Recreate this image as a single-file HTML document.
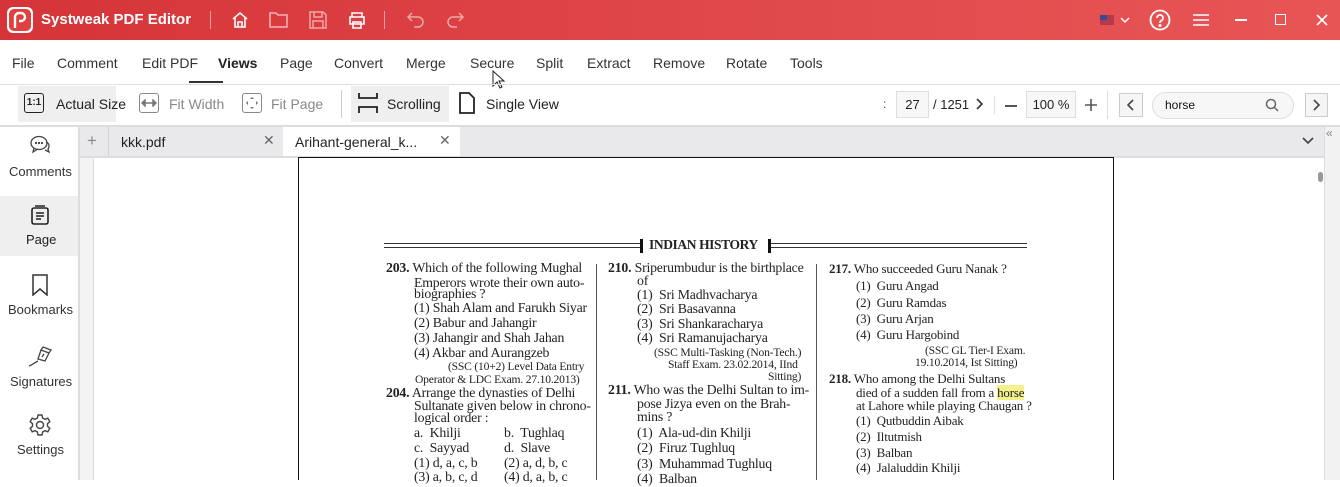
<!DOCTYPE html>
<html><head><meta charset="utf-8"><style>
*{margin:0;padding:0;box-sizing:border-box}
body{width:1340px;height:480px;overflow:hidden;background:#fff;font-family:"Liberation Sans",sans-serif;position:relative;color:#222}
.a{position:absolute;white-space:nowrap}
#title{position:absolute;left:0;top:0;width:1340px;height:40px;background:linear-gradient(90deg,#d53438,#e14a4d 60%,#e85555)}
.menu span{position:absolute;top:55px;font-size:14px;color:#333}
.tb{font-size:14px;color:#222}
.doc{position:absolute;font-family:"Liberation Serif",serif;font-size:13.8px;color:#222;white-space:nowrap;letter-spacing:-0.2px}
.c3{font-size:13px}
.n{font-size:11.6px!important}
svg{position:absolute}
</style></head><body>
<div id="title"></div>
<div class="a" style="left:7px;top:7px;width:26px;height:26px;border-radius:6px;background:#fff;"></div>
<div class="a" style="left:9px;top:9px;width:22px;height:22px;border-radius:5px;background:#e0403f;"></div>
<svg style="left:12px;top:11px" width="16" height="18" viewBox="0 0 16 18"><path d="M3 17V6a4 4 0 0 1 4-4h2a4 4 0 0 1 0 8H7" stroke="#fff" stroke-width="2.4" fill="none"/></svg>
<div class="a" style="left:41px;top:11px;font-size:15px;font-weight:bold;color:#fff">Systweak PDF Editor</div>
<div class="a" style="left:210px;top:11px;width:1px;height:18px;background:#f0a0a0"></div>
<svg style="left:230px;top:10px" width="20" height="20" viewBox="0 0 20 20" fill="none" stroke="#fff" stroke-width="1.6"><path d="M3 9l7-6 7 6M5 8v9h10V8M8 17v-5h4v5"/></svg>
<svg style="left:269px;top:11px" width="20" height="18" viewBox="0 0 20 18" fill="none" stroke="#f4b6b6" stroke-width="1.5"><path d="M1 2h6l2 2h9v12H1z"/></svg>
<svg style="left:308px;top:10px" width="20" height="20" viewBox="0 0 20 20" fill="none" stroke="#f0a8a8" stroke-width="1.5"><path d="M2 2h13l3 3v13H2zM6 2v5h8V2M5 18v-7h10v7"/></svg>
<svg style="left:347px;top:10px" width="20" height="20" viewBox="0 0 20 20" fill="none" stroke="#fff" stroke-width="1.6"><path d="M5 7V3h10v4M3 7h14v7H3zM6 12h8v6H6z"/></svg>
<div class="a" style="left:384px;top:11px;width:1px;height:18px;background:#f0a0a0"></div>
<svg style="left:406px;top:11px" width="20" height="18" viewBox="0 0 20 18" fill="none" stroke="#f0a8a8" stroke-width="1.5"><path d="M6 2L2 6l4 4M2 6h10a5 5 0 0 1 0 10H8"/></svg>
<svg style="left:445px;top:11px" width="20" height="18" viewBox="0 0 20 18" fill="none" stroke="#f0a8a8" stroke-width="1.5"><path d="M14 2l4 4-4 4M18 6H8a5 5 0 0 0 0 10h4"/></svg>
<div class="a" style="left:1100px;top:15px;width:14px;height:10px;background:#b23a4a;"></div>
<div class="a" style="left:1100px;top:15px;width:7px;height:5px;background:#3a4a9a;"></div>
<svg style="left:1119px;top:16px" width="12" height="8" viewBox="0 0 12 8" fill="none" stroke="#fff" stroke-width="1.5"><path d="M2 2l4 4 4-4"/></svg>
<svg style="left:1149px;top:9px" width="22" height="22" viewBox="0 0 22 22" fill="none" stroke="#fff" stroke-width="1.8"><circle cx="11" cy="11" r="9.5"/><path d="M8 9a3 3 0 1 1 4 2.8c-1 .4-1 1-1 2.2"/><circle cx="11" cy="16.5" r=".6" fill="#fff"/></svg>
<svg style="left:1193px;top:13px" width="16" height="14" viewBox="0 0 16 14" stroke="#fff" stroke-width="1.5"><path d="M0 2h16M0 7h16M0 12h16"/></svg>
<div class="a" style="left:1235px;top:19px;width:12px;height:1.5px;background:#fff"></div>
<div class="a" style="left:1275px;top:14px;width:11px;height:11px;border:1.6px solid #fff"></div>
<svg style="left:1316px;top:14px" width="12" height="12" viewBox="0 0 12 12" stroke="#fff" stroke-width="1.6"><path d="M1 1l10 10M11 1L1 11"/></svg>

<div class="menu">
<span style="left:12px">File</span><span style="left:57px">Comment</span><span style="left:142px">Edit PDF</span>
<span style="left:218px;font-weight:bold;color:#222">Views</span><span style="left:280px">Page</span><span style="left:334px">Convert</span>
<span style="left:406px">Merge</span><span style="left:470px">Secure</span><span style="left:536px">Split</span><span style="left:587px">Extract</span>
<span style="left:653px">Remove</span><span style="left:726px">Rotate</span><span style="left:790px">Tools</span>
</div>
<div class="a" style="left:189px;top:81px;width:34px;height:2px;background:#333"></div>
<svg style="left:492px;top:70px" width="14" height="20" viewBox="0 0 14 20"><path d="M1 1v15l4-4 3 6 2-1-3-6h5z" fill="#fff" stroke="#222" stroke-width="1"/></svg>
<div class="a" style="left:0;top:84px;width:1340px;height:1px;background:#e4dcee"></div>

<div class="a" style="left:18px;top:86px;width:98px;height:36px;background:#efefef"></div>
<div class="a" style="left:351px;top:86px;width:98px;height:36px;background:#efefef"></div>
<div class="a" style="left:24px;top:93px;width:20px;height:20px;border:1.8px solid #222;border-radius:3px;font-size:10px;font-weight:bold;text-align:center;line-height:17px">1:1</div>
<div class="a tb" style="left:56px;top:96px">Actual Size</div>
<div class="a" style="left:139px;top:93px;width:20px;height:20px;border:1.5px solid #888;border-radius:3px"></div>
<svg style="left:141px;top:99px" width="16" height="8" viewBox="0 0 16 8" stroke="#777" stroke-width="1.5" fill="#777"><path d="M2 4h12"/><path d="M1 4l3-3v6zM15 4l-3-3v6z"/></svg>
<div class="a tb" style="left:169px;top:96px;color:#888">Fit Width</div>
<div class="a" style="left:242px;top:93px;width:20px;height:20px;border:1.5px solid #888;border-radius:3px"></div>
<svg style="left:244px;top:95px" width="16" height="16" viewBox="0 0 16 16" fill="#777"><path d="M8 2l2 2H6zM8 14l2-2H6zM2 8l2-2v4zM14 8l-2-2v4z"/></svg>
<div class="a tb" style="left:271px;top:96px;color:#888">Fit Page</div>
<div class="a" style="left:341px;top:90px;width:1px;height:28px;background:#ccc"></div>
<svg style="left:358px;top:92px" width="20" height="22" viewBox="0 0 20 22" fill="none" stroke="#222" stroke-width="1.8"><path d="M1 1v5h18V1M1 21v-6h18v6"/></svg>
<div class="a tb" style="left:387px;top:96px">Scrolling</div>
<svg style="left:458px;top:92px" width="18" height="22" viewBox="0 0 18 22" fill="none" stroke="#222" stroke-width="1.8"><path d="M2 1h9l5 5v15H2z"/></svg>
<div class="a tb" style="left:486px;top:96px">Single View</div>
<div class="a" style="left:883px;top:97px;font-size:12px;color:#444">:</div>
<div class="a" style="left:896px;top:91px;width:33px;height:27px;border:1px solid #ddd;background:#f7f7f7;font-size:13px;text-align:center;line-height:25px">27</div>
<div class="a" style="left:933px;top:97px;font-size:13px">/ 1251</div>
<svg style="left:975px;top:98px" width="8" height="12" viewBox="0 0 8 12" fill="none" stroke="#333" stroke-width="1.6"><path d="M2 1l5 5-5 5"/></svg>
<div class="a" style="left:994px;top:96px;width:1px;height:18px;background:#ddd"></div>
<div class="a" style="left:1005px;top:105px;width:12px;height:1.6px;background:#555"></div>
<div class="a" style="left:1026px;top:91px;width:50px;height:27px;border:1px solid #ddd;background:#f7f7f7;font-size:13px;text-align:center;line-height:25px">100 %</div>
<svg style="left:1085px;top:99px" width="12" height="12" viewBox="0 0 12 12" stroke="#555" stroke-width="1.6"><path d="M6 0v12M0 6h12"/></svg>
<div class="a" style="left:1107px;top:91px;width:1px;height:28px;background:#ddd"></div>
<div class="a" style="left:1119px;top:93px;width:24px;height:24px;border:1px solid #ccc;background:#f5f5f5"></div>
<svg style="left:1127px;top:99px" width="8" height="12" viewBox="0 0 8 12" fill="none" stroke="#444" stroke-width="1.6"><path d="M6 1L1 6l5 5"/></svg>
<div class="a" style="left:1152px;top:92px;width:142px;height:27px;border:1px solid #ddd;border-radius:14px;background:#f7f7f7"></div>
<div class="a" style="left:1165px;top:98px;font-size:12px;color:#111">horse</div>
<svg style="left:1265px;top:98px" width="14" height="14" viewBox="0 0 14 14" fill="none" stroke="#666" stroke-width="1.5"><circle cx="6" cy="6" r="4.5"/><path d="M9.5 9.5L13 13"/></svg>
<div class="a" style="left:1305px;top:93px;width:23px;height:24px;border:1px solid #ccc;background:#f5f5f5"></div>
<svg style="left:1312px;top:99px" width="8" height="12" viewBox="0 0 8 12" fill="none" stroke="#444" stroke-width="1.6"><path d="M2 1l5 5-5 5"/></svg>
<div class="a" style="left:0;top:125px;width:1340px;height:2px;background:#ddd"></div>

<div class="a" style="left:78px;top:127px;width:2px;height:353px;background:#ddd"></div>
<div class="a" style="left:0;top:196px;width:78px;height:60px;background:#efefef"></div>
<svg style="left:29px;top:134px" width="22" height="22" viewBox="0 0 22 22" fill="none" stroke="#444" stroke-width="1.3"><ellipse cx="10" cy="9" rx="8" ry="6.5"/><path d="M5 14l-1 4 5-3"/><path d="M17 8c3 1 4 4 2 7l1 3-4-2" /><circle cx="7" cy="9" r=".5" fill="#444"/><circle cx="10" cy="9" r=".5" fill="#444"/><circle cx="13" cy="9" r=".5" fill="#444"/></svg>
<div class="a" style="left:9px;top:164px;font-size:13px;color:#333">Comments</div>
<svg style="left:31px;top:205px" width="18" height="20" viewBox="0 0 18 20" fill="none" stroke="#222" stroke-width="1.6"><rect x="1" y="3" width="16" height="16" rx="2"/><path d="M4 1h10M5 8h8M5 11h8M5 14h5"/></svg>
<div class="a" style="left:26px;top:232px;font-size:13px;color:#222">Page</div>
<svg style="left:32px;top:274px" width="16" height="22" viewBox="0 0 16 22" fill="none" stroke="#333" stroke-width="1.5"><path d="M1 1h14v20l-7-6-7 6z"/></svg>
<div class="a" style="left:8px;top:302px;font-size:13px;color:#333">Bookmarks</div>
<svg style="left:28px;top:345px" width="24" height="22" viewBox="0 0 24 22" fill="none" stroke="#444" stroke-width="1.3"><path d="M10 14l3-9 8 3-4 8z M13 5l2-3 8 3-2 3M14 12l2-3"/><path d="M1 21c3-1 5-3 9-5"/></svg>
<div class="a" style="left:10px;top:374px;font-size:13px;color:#333">Signatures</div>
<svg style="left:29px;top:414px" width="22" height="22" viewBox="0 0 22 22" fill="none" stroke="#444" stroke-width="1.4"><circle cx="11" cy="11" r="3.5"/><path d="M9 1h4l.6 3 2.4 1.4 2.8-1.2 2 3.5-2.3 2v2.6l2.3 2-2 3.5-2.8-1.2L13.6 18l-.6 3H9l-.6-3-2.4-1.4-2.8 1.2-2-3.5 2.3-2V9.7L1.2 7.7l2-3.5L6 5.4 8.4 4z"/></svg>
<div class="a" style="left:17px;top:442px;font-size:13px;color:#333">Settings</div>

<div class="a" style="left:80px;top:127px;width:1244px;height:29px;background:#e9e9eb"></div>
<div class="a" style="left:108px;top:127px;width:1px;height:29px;background:#d4d4d4"></div>
<div class="a" style="left:87px;top:131px;font-size:17px;color:#888">+</div>
<div class="a" style="left:121px;top:134px;font-size:14px;color:#222">kkk.pdf</div>
<div class="a" style="left:263px;top:132px;font-size:14px;color:#666">✕</div>
<div class="a" style="left:283px;top:127px;width:177px;height:29px;background:#fff"></div>
<div class="a" style="left:295px;top:134px;font-size:14px;color:#222">Arihant-general_k...</div>
<div class="a" style="left:439px;top:132px;font-size:14px;color:#666">✕</div>
<svg style="left:1302px;top:137px" width="12" height="8" viewBox="0 0 12 8" fill="none" stroke="#444" stroke-width="1.6"><path d="M1 1l5 5 5-5"/></svg>
<div class="a" style="left:80px;top:156px;width:1244px;height:2px;background:#ddd"></div>
<div class="a" style="left:1324px;top:127px;width:16px;height:353px;background:#f2f2f2;border-left:1px solid #ddd"></div>
<div class="a" style="left:1326px;top:126px;font-size:12px;color:#888">«</div>
<div class="a" style="left:1318px;top:172px;width:5px;height:10px;border-radius:3px;background:#999"></div>
<div class="a" style="left:80px;top:158px;width:14px;height:322px;background:#f3f3f3;border-right:1px solid #ddd"></div>

<div class="a" style="left:298px;top:157px;width:816px;height:323px;border:1.5px solid #111;border-bottom:none;background:#fff"></div>
<div class="a" style="left:384px;top:243px;width:256px;height:5px;border-top:1px solid #333;border-bottom:1px solid #333"></div>
<div class="a" style="left:770px;top:243px;width:257px;height:5px;border-top:1px solid #333;border-bottom:1px solid #333"></div>
<div class="a" style="left:640px;top:239px;width:3px;height:14px;background:#111"></div>
<div class="a" style="left:768px;top:239px;width:3px;height:14px;background:#111"></div>
<div class="doc" style="left:649px;top:237px;font-size:13.5px;font-weight:bold;letter-spacing:-0.4px">INDIAN HISTORY</div>
<div class="a" style="left:596px;top:264px;width:1px;height:216px;background:#555"></div>
<div class="a" style="left:816px;top:264px;width:1px;height:216px;background:#555"></div>

<div class="doc" style="left:386px;top:260px"><b>203.</b> Which of the following Mughal</div>
<div class="doc" style="left:414px;top:275px">Emperors wrote their own auto-</div>
<div class="doc" style="left:414px;top:286px">biographies ?</div>
<div class="doc" style="left:414px;top:300px">(1) Shah Alam and Farukh Siyar</div>
<div class="doc" style="left:414px;top:315px">(2) Babur and Jahangir</div>
<div class="doc" style="left:414px;top:330px">(3) Jahangir and Shah Jahan</div>
<div class="doc" style="left:414px;top:345px">(4) Akbar and Aurangzeb</div>
<div class="doc n" style="left:448px;top:360px">(SSC (10+2) Level Data Entry</div>
<div class="doc n" style="left:415px;top:373px">Operator &amp; LDC Exam. 27.10.2013)</div>
<div class="doc" style="left:386px;top:385px"><b>204.</b> Arrange the dynasties of Delhi</div>
<div class="doc" style="left:414px;top:398px">Sultanate given below in chrono-</div>
<div class="doc" style="left:414px;top:410px">logical order :</div>
<div class="doc" style="left:414px;top:425px">a.&nbsp; Khilji</div><div class="doc" style="left:504px;top:425px">b.&nbsp; Tughlaq</div>
<div class="doc" style="left:414px;top:440px">c.&nbsp; Sayyad</div><div class="doc" style="left:504px;top:440px">d.&nbsp; Slave</div>
<div class="doc" style="left:414px;top:455px">(1) d, a, c, b</div><div class="doc" style="left:504px;top:455px">(2) a, d, b, c</div>
<div class="doc" style="left:414px;top:469px">(3) a, b, c, d</div><div class="doc" style="left:504px;top:469px">(4) d, a, b, c</div>

<div class="doc" style="left:608px;top:260px"><b>210.</b> Sriperumbudur is the birthplace</div>
<div class="doc" style="left:637px;top:273px">of</div>
<div class="doc" style="left:637px;top:287px">(1)&nbsp; Sri Madhvacharya</div>
<div class="doc" style="left:637px;top:301px">(2)&nbsp; Sri Basavanna</div>
<div class="doc" style="left:637px;top:316px">(3)&nbsp; Sri Shankaracharya</div>
<div class="doc" style="left:637px;top:330px">(4)&nbsp; Sri Ramanujacharya</div>
<div class="doc n" style="left:654px;top:346px">(SSC Multi-Tasking (Non-Tech.)</div>
<div class="doc n" style="left:668px;top:358px">Staff Exam. 23.02.2014, IInd</div>
<div class="doc n" style="left:768px;top:370px">Sitting)</div>
<div class="doc" style="left:608px;top:382px"><b>211.</b> Who was the Delhi Sultan to im-</div>
<div class="doc" style="left:637px;top:396px">pose Jizya even on the Brah-</div>
<div class="doc" style="left:637px;top:409px">mins ?</div>
<div class="doc" style="left:637px;top:425px">(1)&nbsp; Ala-ud-din Khilji</div>
<div class="doc" style="left:637px;top:440px">(2)&nbsp; Firuz Tughluq</div>
<div class="doc" style="left:637px;top:456px">(3)&nbsp; Muhammad Tughluq</div>
<div class="doc" style="left:637px;top:471px">(4)&nbsp; Balban</div>

<div class="doc c3" style="left:829px;top:261px"><b>217.</b> Who succeeded Guru Nanak ?</div>
<div class="doc c3" style="left:856px;top:278px">(1)&nbsp; Guru Angad</div>
<div class="doc c3" style="left:856px;top:295px">(2)&nbsp; Guru Ramdas</div>
<div class="doc c3" style="left:856px;top:311px">(3)&nbsp; Guru Arjan</div>
<div class="doc c3" style="left:856px;top:327px">(4)&nbsp; Guru Hargobind</div>
<div class="doc n" style="left:925px;top:344px">(SSC GL Tier-I Exam.</div>
<div class="doc n" style="left:915px;top:356px">19.10.2014, Ist Sitting)</div>
<div class="doc c3" style="left:829px;top:371px"><b>218.</b> Who among the Delhi Sultans</div>
<div class="doc c3" style="left:856px;top:385px">died of a sudden fall from a <span style="background:#f4f08a">horse</span></div>
<div class="doc c3" style="left:856px;top:398px">at Lahore while playing Chaugan ?</div>
<div class="doc c3" style="left:856px;top:413px">(1)&nbsp; Qutbuddin Aibak</div>
<div class="doc c3" style="left:856px;top:429px">(2)&nbsp; Iltutmish</div>
<div class="doc c3" style="left:856px;top:445px">(3)&nbsp; Balban</div>
<div class="doc c3" style="left:856px;top:460px">(4)&nbsp; Jalaluddin Khilji</div>
</body></html>
